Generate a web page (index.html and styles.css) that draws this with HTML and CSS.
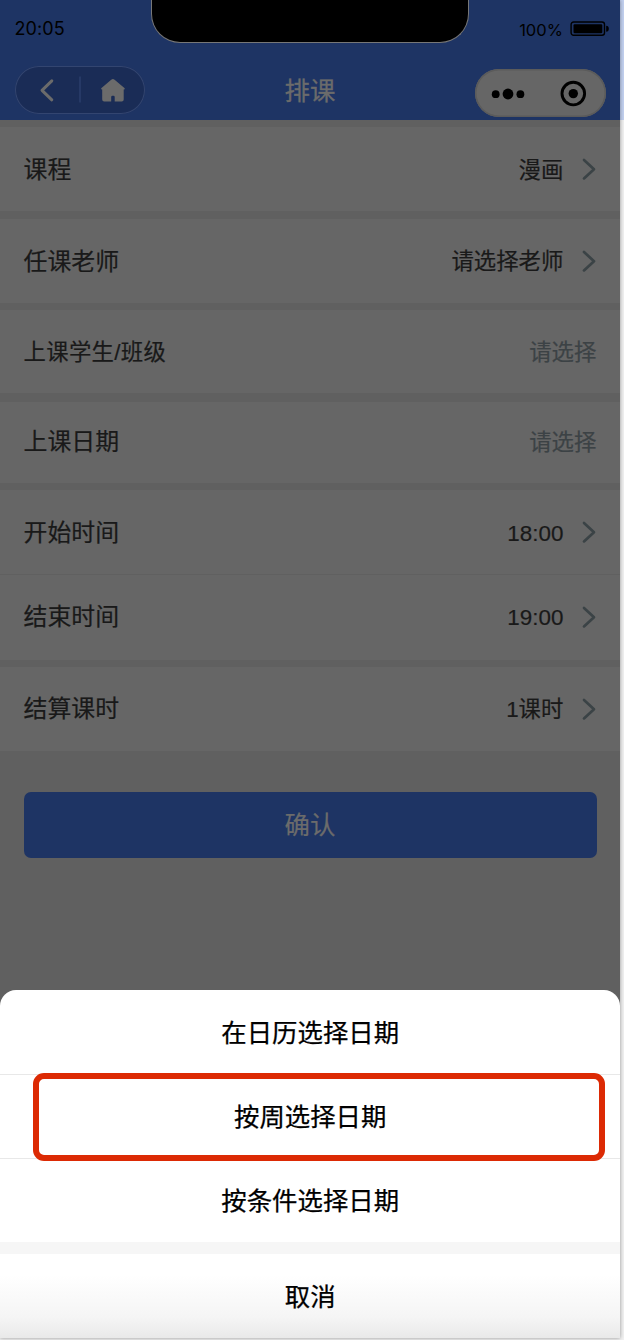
FILE: index.html
```html
<!DOCTYPE html>
<html lang="zh-CN">
<head>
<meta charset="utf-8">
<title>排课</title>
<link rel="stylesheet" href="styles.css">
</head>
<body>
<svg class="defs" width="0" height="0"><symbol id="chevron" viewBox="0 0 16 24"><path d="M3 3 L13 12.2 L3 21.4" fill="none" stroke="#3b4346" stroke-width="2.7" stroke-linecap="round" stroke-linejoin="round"/></symbol></svg>
<div class="phone">
  <header class="header">
    <div class="notch"></div>
    <div class="status">
      <span class="clock">20:05</span>
      <div class="power">
        <span class="percent">100%</span>
        <svg class="battery" width="40" height="16" viewBox="0 0 40 16"><rect x="1.1" y="1" width="33.4" height="13.2" rx="2.5" fill="none" stroke="#000" stroke-width="1.4"/><rect x="3.5" y="3.2" width="28.8" height="9" rx="1.2"/><path d="M36.2 4.8Q38.8 5 38.8 7.7Q38.8 10.5 36.2 10.7Z"/></svg>
      </div>
    </div>
    <div class="nav">
      <div class="nav-left">
        <svg width="130" height="48" viewBox="0 0 130 48"><path d="M36.8 14.8 L27 24.3 L36.8 33.8" fill="none" stroke="#6b6b6b" stroke-width="3" stroke-linecap="round" stroke-linejoin="round"/><path d="M65 10.5V36.5" stroke="#334777" stroke-width="1"/><path d="M96.2 13.7Q97.9 12.3 99.6 13.7L109.7 22.2Q110.2 23.4 108.7 23.5V33.5Q108.7 35.5 106.7 35.5H99.7V31Q99.7 29.8 98.5 29.8H97.4Q96.2 29.8 96.2 31V35.5H89.2Q87.2 35.5 87.2 33.5V23.5Q85.6 23.4 86.2 22.2Z" fill="#6b6b6b"/></svg>
      </div>
      <h1 class="title">排课</h1>
      <div class="nav-right">
        <svg width="131" height="48" viewBox="0 0 131 48"><circle cx="20.7" cy="25.2" r="3.9"/><circle cx="33" cy="25" r="5.4"/><circle cx="45.4" cy="25.2" r="3.9"/><circle cx="98.3" cy="24.6" r="11.3" fill="none" stroke="#000" stroke-width="2.9"/><circle cx="98.3" cy="24.6" r="4.7"/></svg>
      </div>
    </div>
  </header>
  <main class="form">
    <div class="row"><span class="label">课程</span><span class="value">漫画</span><svg class="arrow"><use href="#chevron"/></svg></div>
    <div class="row"><span class="label">任课老师</span><span class="value">请选择老师</span><svg class="arrow"><use href="#chevron"/></svg></div>
    <div class="row students"><span class="label compact">上课学生/班级</span><span class="value placeholder">请选择</span></div>
    <div class="row date"><span class="label">上课日期</span><span class="value placeholder">请选择</span></div>
    <div class="row"><span class="label">开始时间</span><span class="value">18:00</span><svg class="arrow"><use href="#chevron"/></svg></div>
    <div class="row joined"><span class="label">结束时间</span><span class="value">19:00</span><svg class="arrow"><use href="#chevron"/></svg></div>
    <div class="row"><span class="label">结算课时</span><span class="value">1课时</span><svg class="arrow"><use href="#chevron"/></svg></div>
    <button class="confirm">确认</button>
  </main>
  <section class="sheet">
    <div class="option">在日历选择日期</div>
    <div class="option selected">按周选择日期</div>
    <div class="option">按条件选择日期</div>
    <div class="cancel">取消</div>
  </section>
</div>
</body>
</html>
```
FILE: styles.css
```css
* { box-sizing: border-box; }
body {
  margin: 0;
  height: 1340px;
  overflow: hidden;
  background: linear-gradient(#c3d1f0 0 120px, #f1f1f1 120px);
  font-family: "Liberation Sans", "Noto Sans CJK SC", sans-serif;
}
.defs { position: absolute; }
.phone {
  display: flex;
  flex-direction: column;
  width: 620.4px;
  height: 1338px;
  background: #606060;
  box-shadow: 0 0 4px rgba(0, 0, 0, .4);
}
.header {
  position: relative;
  flex: none;
  height: 120px;
  background: #1e3464;
}
.notch {
  position: absolute;
  left: 151px;
  top: 0;
  width: 318px;
  height: 43px;
  background: #000;
  border: 1px solid #777;
  border-top: 0;
  border-radius: 0 0 29px 29px;
}
.status {
  display: flex;
  justify-content: space-between;
  height: 66px;
  padding: 18px 10px 0 14.5px;
  font-family: Inter, sans-serif;
  line-height: 22px;
}
.clock { font-size: 18px; letter-spacing: .1px; }
.power { display: flex; gap: 7.5px; }
.percent { font-size: 16.5px; line-height: 25px; }
.battery { margin-top: 3px; }
.nav {
  display: grid;
  grid-template-columns: 130px 1fr 131px;
  padding: 0 14px 0 14.5px;
}
.nav svg { display: block; }
.nav-left {
  height: 48px;
  border-radius: 24px;
  background: #1a2c56;
  box-shadow: inset 0 0 0 1px #334570;
}
.title {
  margin: 0;
  color: #6b6b6b;
  font-size: 25.4px;
  font-weight: 400;
  line-height: 50px;
  text-align: center;
  -webkit-text-stroke: .3px;
}
.nav-right {
  height: 48px;
  margin-top: 3px;
  border-radius: 24px;
  background: #666;
  box-shadow: inset 0 0 0 1.5px #5b5b5b;
}
.form { flex: none; height: 870px; padding-top: 7px; }
.row {
  display: flex;
  align-items: center;
  height: 84px;
  margin-bottom: 7.5px;
  padding: 0 24px 0 23.5px;
  background: #666;
  color: #191919;
  line-height: 34px;
  -webkit-text-stroke: .2px;
}
.row.students { height: 83px; margin-bottom: 8.5px; }
.row.date { height: 81.5px; margin-bottom: 7px; }
.row.joined { margin-top: -7.5px; border-top: 1.5px solid #606060; height: 85.5px; }
.label { flex: 1; padding-top: 2px; font-size: 23.9px; }
.label.compact { font-size: 22.4px; letter-spacing: .3px; }
.joined .label, .joined ~ .row .label { padding-top: 0; }
.date .label { padding-top: 0; }
.value { font-size: 22.4px; padding-top: 3px; }
.joined .value, .joined ~ .row .value, .date .value { padding-top: 1px; }
.placeholder { color: #3c4245; }
.arrow { width: 16px; height: 24px; margin: 0 -1px 0 18px; }
.confirm {
  display: block;
  width: 573px;
  height: 66px;
  margin: 40.5px 0 0 23.5px;
  padding: 0 0 4px;
  border: 0;
  border-radius: 7px;
  background: #1e3464;
  color: #6b6b6b;
  font: inherit;
  font-size: 25.4px;
  -webkit-text-stroke: .2px;
}
.sheet {
  flex: none;
  height: 348px;
  overflow: hidden;
  border-radius: 16px 16px 0 0;
  background: #fff;
  color: #000;
  font-size: 25.4px;
  line-height: 86px;
  text-align: center;
  -webkit-text-stroke: .25px;
}
.option { position: relative; height: 84px; }
.option + .option { border-top: 1px solid #e8e8e8; line-height: 85px; }
.option.selected::after {
  content: "";
  position: absolute;
  box-sizing: border-box;
  z-index: 1;
  left: 33px;
  top: -2px;
  width: 572px;
  height: 88px;
  border: 6px solid #dc2a04;
  border-radius: 11px;
}
.cancel {
  height: 96px;
  border-top: 12px solid #f6f6f6;
  background: linear-gradient(#fff 25%, #f5f5f5 75%, #e9e9e9);
}
```
